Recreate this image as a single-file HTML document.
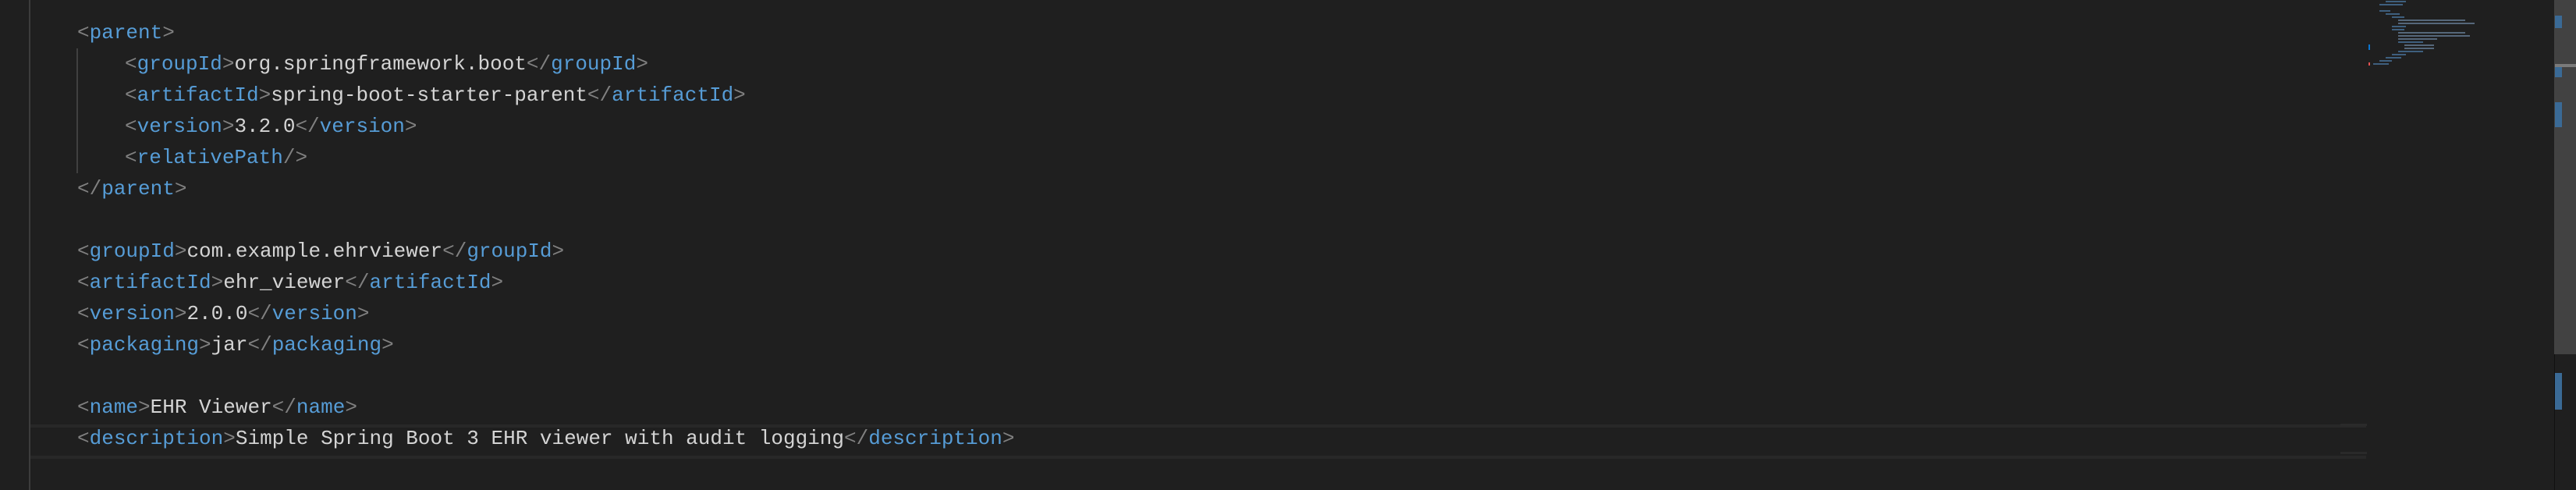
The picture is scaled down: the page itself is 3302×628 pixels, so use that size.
<!DOCTYPE html>
<html><head><meta charset="utf-8"><style>
html,body{margin:0;padding:0;width:3302px;height:628px;background:#1f1f1f;overflow:hidden;}
.ed{position:absolute;left:0;top:0;width:3302px;height:628px;}
.gut{position:absolute;left:37px;top:0;width:2px;height:628px;background:#3c3c3c;}
.guide{position:absolute;left:98px;top:62px;width:2px;height:160px;background:#404040;}
.cur{position:absolute;left:39px;top:544px;width:2994px;height:36px;border-top:4px solid #282828;border-bottom:4px solid #282828;}
.l{position:absolute;height:40px;line-height:40px;font-family:"Liberation Mono",monospace;font-size:26px;color:#d4d4d4;white-space:pre;}
.b{color:#808080}.t{color:#569cd6}
.sb{position:absolute;left:3274px;top:0;width:28px;height:454px;background:#424242;}
.sb2{position:absolute;left:3274px;top:454px;width:1px;height:174px;background:#111;}
.mk{position:absolute;left:3275px;width:9px;background:#3a6a96;}
.mm{position:absolute;height:2px;}
</style></head><body><div class="ed">
<div class="gut"></div><div class="guide"></div><div class="cur"></div>
<div class="l" style="left:99px;top:22px"><span class="b">&lt;</span><span class="t">parent</span><span class="b">&gt;</span></div>
<div class="l" style="left:160px;top:62px"><span class="b">&lt;</span><span class="t">groupId</span><span class="b">&gt;</span>org.springframework.boot<span class="b">&lt;/</span><span class="t">groupId</span><span class="b">&gt;</span></div>
<div class="l" style="left:160px;top:102px"><span class="b">&lt;</span><span class="t">artifactId</span><span class="b">&gt;</span>spring-boot-starter-parent<span class="b">&lt;/</span><span class="t">artifactId</span><span class="b">&gt;</span></div>
<div class="l" style="left:160px;top:142px"><span class="b">&lt;</span><span class="t">version</span><span class="b">&gt;</span>3.2.0<span class="b">&lt;/</span><span class="t">version</span><span class="b">&gt;</span></div>
<div class="l" style="left:160px;top:182px"><span class="b">&lt;</span><span class="t">relativePath</span><span class="b">/&gt;</span></div>
<div class="l" style="left:99px;top:222px"><span class="b">&lt;/</span><span class="t">parent</span><span class="b">&gt;</span></div>
<div class="l" style="left:99px;top:302px"><span class="b">&lt;</span><span class="t">groupId</span><span class="b">&gt;</span>com.example.ehrviewer<span class="b">&lt;/</span><span class="t">groupId</span><span class="b">&gt;</span></div>
<div class="l" style="left:99px;top:342px"><span class="b">&lt;</span><span class="t">artifactId</span><span class="b">&gt;</span>ehr_viewer<span class="b">&lt;/</span><span class="t">artifactId</span><span class="b">&gt;</span></div>
<div class="l" style="left:99px;top:382px"><span class="b">&lt;</span><span class="t">version</span><span class="b">&gt;</span>2.0.0<span class="b">&lt;/</span><span class="t">version</span><span class="b">&gt;</span></div>
<div class="l" style="left:99px;top:422px"><span class="b">&lt;</span><span class="t">packaging</span><span class="b">&gt;</span>jar<span class="b">&lt;/</span><span class="t">packaging</span><span class="b">&gt;</span></div>
<div class="l" style="left:99px;top:502px"><span class="b">&lt;</span><span class="t">name</span><span class="b">&gt;</span>EHR Viewer<span class="b">&lt;/</span><span class="t">name</span><span class="b">&gt;</span></div>
<div class="l" style="left:99px;top:542px"><span class="b">&lt;</span><span class="t">description</span><span class="b">&gt;</span>Simple Spring Boot 3 EHR viewer with audit logging<span class="b">&lt;/</span><span class="t">description</span><span class="b">&gt;</span></div>

<div class="mm" style="left:3058px;top:1px;width:26px;background:#3e5f7e"></div>
<div class="mm" style="left:3050px;top:5px;width:30px;background:#3e5f7e"></div>
<div class="mm" style="left:3050px;top:13px;width:14px;background:#3e5f7e"></div>
<div class="mm" style="left:3058px;top:17px;width:18px;background:#3e5f7e"></div>
<div class="mm" style="left:3066px;top:21px;width:16px;background:#3e5f7e"></div>
<div class="mm" style="left:3074px;top:25px;width:86px;background:#55677a"></div>
<div class="mm" style="left:3074px;top:29px;width:98px;background:#55677a"></div>
<div class="mm" style="left:3066px;top:33px;width:18px;background:#3e5f7e"></div>
<div class="mm" style="left:3066px;top:37px;width:16px;background:#3e5f7e"></div>
<div class="mm" style="left:3074px;top:41px;width:86px;background:#55677a"></div>
<div class="mm" style="left:3074px;top:45px;width:92px;background:#55677a"></div>
<div class="mm" style="left:3074px;top:49px;width:50px;background:#55677a"></div>
<div class="mm" style="left:3074px;top:53px;width:32px;background:#3e5f7e"></div>
<div class="mm" style="left:3082px;top:57px;width:38px;background:#55677a"></div>
<div class="mm" style="left:3082px;top:61px;width:38px;background:#55677a"></div>
<div class="mm" style="left:3074px;top:65px;width:32px;background:#3e5f7e"></div>
<div class="mm" style="left:3066px;top:69px;width:18px;background:#3e5f7e"></div>
<div class="mm" style="left:3058px;top:73px;width:20px;background:#3e5f7e"></div>
<div class="mm" style="left:3050px;top:77px;width:16px;background:#3e5f7e"></div>
<div class="mm" style="left:3042px;top:81px;width:20px;background:#3e5f7e"></div>
<div style="position:absolute;left:3036px;top:57px;width:2px;height:7px;background:#0a74d0"></div>
<div style="position:absolute;left:3036px;top:80px;width:2px;height:4px;background:#e05050"></div>
<div style="position:absolute;left:3000px;top:543px;width:34px;height:3px;background:#2a2a2a"></div>
<div style="position:absolute;left:3000px;top:579px;width:34px;height:3px;background:#2a2a2a"></div>

<div class="sb"></div><div class="sb2"></div>
<div style="position:absolute;left:3275px;top:82px;width:27px;height:4px;background:#7a7a7a"></div>
<div class="mk" style="top:20px;height:16px"></div>
<div class="mk" style="top:86px;height:13px"></div>
<div class="mk" style="top:131px;height:32px"></div>
<div class="mk" style="top:478px;height:47px;display:none"></div>
<div class="mk" style="top:478px;height:47px"></div>
</div></body></html>
